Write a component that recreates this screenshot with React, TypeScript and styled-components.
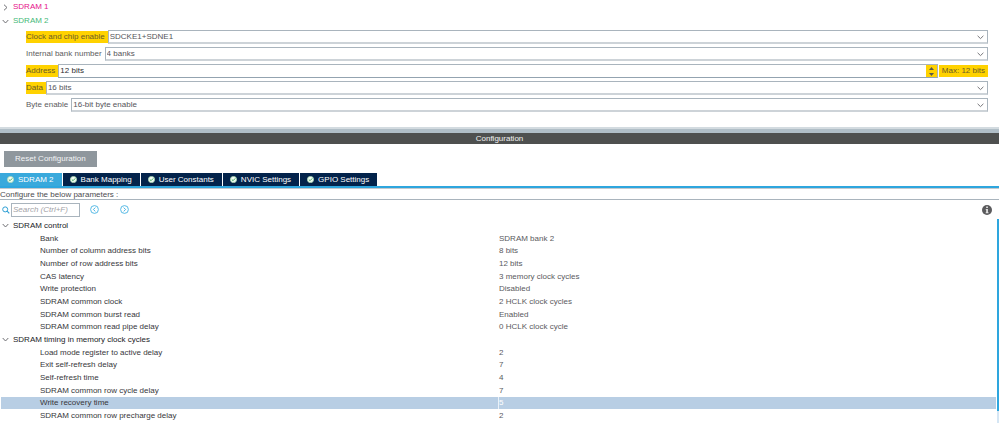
import React, { useState } from 'react';
import styled, { createGlobalStyle } from 'styled-components';

const GlobalStyle = createGlobalStyle`
  *, *::before, *::after { box-sizing: border-box; }
  body {
    margin: 0;
    background: #ffffff;
    color: #4c4c50;
    font-family: "Liberation Sans", Arial, sans-serif;
    font-size: 8px;
    line-height: 12px;
  }
  button, input, select {
    margin: 0;
    border: 0;
    border-radius: 0;
    padding: 0;
    background: none;
    color: inherit;
    font: inherit;
    letter-spacing: inherit;
  }
  button { cursor: pointer; }
`;

const Page = styled.div`
  display: flex;
  flex-direction: column;
  min-height: 100vh;
`;

const ModePanel = styled.section`
  padding-bottom: 15px;
`;

const TreeToggle = styled.button<{ $tone: string }>`
  display: flex;
  align-items: center;
  gap: 4px;
  height: 14px;
  padding-left: 2px;
  color: ${p => p.$tone};
`;

const Fields = styled.div`
  display: flex;
  flex-direction: column;
  gap: 3px;
  padding: 2px 11px 0 26px;
`;

const FieldRow = styled.div`
  display: flex;
  align-items: center;
  height: 14px;
`;

const FieldLabel = styled.label<{ $marked?: boolean }>`
  flex: none;
  height: 12px;
  padding-right: 3px;
  background: ${p => (p.$marked ? '#ffd200' : 'transparent')};
  color: ${p => (p.$marked ? '#6a5c28' : '#5c5c60')};
`;

const SelectBox = styled.div`
  position: relative;
  flex: 1;
  display: flex;
  height: 14px;
  border: 1px solid #a9b4bd;
  border-bottom: 2px solid #cdd3d8;

  svg {
    position: absolute;
    right: 3px;
    top: 4px;
    pointer-events: none;
  }
`;

const Select = styled.select`
  appearance: none;
  width: 100%;
  padding-left: 1px;
  color: #55555a;
`;

const NumberBox = styled.div`
  flex: 1;
  display: flex;
  height: 14px;
  border: 1px solid #a9b4bd;
  border-bottom-color: #93a3b0;
`;

const NumberInput = styled.input`
  flex: 1;
  min-width: 0;
  padding-left: 1px;
  color: #2c2c30;
`;

const Spinner = styled.div`
  display: flex;
  flex-direction: column;
  width: 11px;
  background: #ffd200;

  button {
    display: flex;
    flex: 1;
    align-items: center;
    justify-content: center;
  }
`;

const MaxNote = styled.span`
  height: 12px;
  margin-left: 1px;
  padding: 0 3px;
  background: #ffd200;
  color: #6a5c28;
`;

const Splitter = styled.div`
  height: 6px;
  border-top: 2px solid #d3dbe0;
  background: #b0bec7;
`;

const TitleBar = styled.h2`
  height: 11px;
  margin: 0;
  background: #4e504f;
  color: #f2f2f2;
  font-size: 8px;
  font-weight: 400;
  line-height: 12px;
  text-align: center;
`;

const ResetButton = styled.button`
  align-self: flex-start;
  height: 16px;
  margin: 7px 4px 6px;
  padding: 0 11px;
  background: #8f979d;
  color: #f4f5f6;
`;

const TabBar = styled.div`
  display: flex;
  gap: 1px;
  border-bottom: 2px solid #2ea6de;
`;

const Tab = styled.button<{ $active: boolean }>`
  display: flex;
  align-items: center;
  gap: 4px;
  height: 13px;
  padding: 0 8px 0 7px;
  background: ${p => (p.$active ? '#39a9dc' : '#03234b')};
  color: #ffffff;
`;

const Hint = styled.p`
  height: 12px;
  margin: 0;
  border-top: 1px solid #c3c9ce;
  border-bottom: 1px solid #a9b4bd;
`;

const SearchBar = styled.div`
  display: flex;
  align-items: center;
  height: 19px;
  padding: 0 7px 0 2px;
`;

const SearchLabel = styled.label`
  display: flex;
  width: 9px;
`;

const SearchInput = styled.input`
  width: 69px;
  height: 14px;
  margin-right: 10px;
  padding-left: 1px;
  border: 1px solid #a9b4bd;

  &::placeholder {
    color: #a2a2a6;
    font-style: italic;
    opacity: 1;
  }
`;

const IconButton = styled.button<{ $end?: boolean }>`
  display: flex;
  margin-left: ${p => (p.$end ? 'auto' : '0')};
  margin-right: ${p => (p.$end ? '0' : '21px')};
`;

const ParameterArea = styled.div`
  display: flex;
  flex: 1;
  align-items: stretch;
`;

const ParameterTable = styled.table`
  flex: 1;
  align-self: flex-start;
  border-collapse: collapse;
  table-layout: fixed;
  margin: 0 1px;

  th, td {
    height: 13px;
    padding: 0;
    font-weight: 400;
    line-height: 12px;
    text-align: left;
    white-space: nowrap;
  }
  tr:nth-child(3n) th, tr:nth-child(3n) td { height: 12px; }
`;

const SectionToggle = styled.button`
  display: flex;
  align-items: center;
  gap: 4px;
  padding-left: 1px;
  color: #222226;
`;

const ParameterRow = styled.tr<{ $selected: boolean }>`
  background: ${p => (p.$selected ? '#b8cee4' : 'transparent')};
  cursor: default;

  th { padding-left: 39px; color: #37373b; }
  td {
    border-left: 1px solid ${p => (p.$selected ? '#eaf1f8' : 'transparent')};
    color: ${p => (p.$selected ? '#ffffff' : '#5a5a5e')};
  }
`;

const ScrollTrack = styled.div`
  width: 2px;
  padding-bottom: 12px;
  background: #d5e6f4;
`;

const ScrollThumb = styled.div`
  height: 100%;
  background: #2ea6de;
`;

const Chevron = ({ open = true }: { open?: boolean }) => (
  <svg width="7" height="7" viewBox="0 0 7 7" fill="none" stroke="#707074" aria-hidden="true">
    <path d={open ? 'M0.7 2L3.5 5L6.3 2' : 'M2 0.7L5 3.5L2 6.3'} />
  </svg>
);

const SelectArrow = () => (
  <svg width="7" height="5" viewBox="0 0 7 5" fill="none" stroke="#77777b" aria-hidden="true">
    <path d="M0.6 0.8L3.5 3.6L6.4 0.8" />
  </svg>
);

const SpinArrow = ({ up }: { up?: boolean }) => (
  <svg width="5" height="3" viewBox="0 0 5 3" fill="#55564e" aria-hidden="true">
    <path d={up ? 'M0 3L2.5 0L5 3Z' : 'M0 0L2.5 3L5 0Z'} />
  </svg>
);

const CheckIcon = () => (
  <svg width="7" height="7" viewBox="0 0 7 7" aria-hidden="true">
    <circle cx="3.5" cy="3.5" r="3.1" fill="#f4fbf5" stroke="#a9dcb4" strokeWidth="0.8" />
    <path d="M1.8 3.5L3.1 4.7L5.2 2.4" fill="none" stroke="#3fae5c" />
  </svg>
);

const SearchIcon = () => (
  <svg width="8" height="8" viewBox="0 0 8 8" fill="none" stroke="#2e9fd4" aria-hidden="true">
    <circle cx="3.2" cy="3.4" r="2.5" />
    <path d="M5.1 5.2L7.3 7.4" strokeWidth="1.2" />
  </svg>
);

const StepIcon = ({ next }: { next?: boolean }) => (
  <svg width="9" height="9" viewBox="0 0 9 9" fill="none" stroke="#45b2e2" aria-hidden="true">
    <circle cx="4.5" cy="4.5" r="3.9" strokeWidth="0.9" />
    <path d={next ? 'M3.7 2.6L5.6 4.5L3.7 6.4' : 'M5.3 2.6L3.4 4.5L5.3 6.4'} />
  </svg>
);

const InfoIcon = () => (
  <svg width="10" height="10" viewBox="0 0 10 10" aria-hidden="true">
    <circle cx="5" cy="5" r="5" fill="#5b5b5d" />
    <path d="M4.2 1.6h1.7v1.3H4.2zM3.7 3.9h2.2v3.4h.6v.9H3.7v-.9h.5V4.8h-.5z" fill="#e6e6e6" />
  </svg>
);

interface SelectFieldProps {
  id: string;
  label: string;
  value: string;
  marked?: boolean;
}

const SelectField = ({ id, label, value, marked }: SelectFieldProps) => (
  <FieldRow>
    <FieldLabel htmlFor={id} $marked={marked}>{label}</FieldLabel>
    <SelectBox>
      <Select id={id} defaultValue={value}>
        <option>{value}</option>
      </Select>
      <SelectArrow />
    </SelectBox>
  </FieldRow>
);

const tabs = ['SDRAM 2', 'Bank Mapping', 'User Constants', 'NVIC Settings', 'GPIO Settings'];

const sections: { title: string; rows: [string, string][] }[] = [
  {
    title: 'SDRAM control',
    rows: [
      ['Bank', 'SDRAM bank 2'],
      ['Number of column address bits', '8 bits'],
      ['Number of row address bits', '12 bits'],
      ['CAS latency', '3 memory clock cycles'],
      ['Write protection', 'Disabled'],
      ['SDRAM common clock', '2 HCLK clock cycles'],
      ['SDRAM common burst read', 'Enabled'],
      ['SDRAM common read pipe delay', '0 HCLK clock cycle'],
    ],
  },
  {
    title: 'SDRAM timing in memory clock cycles',
    rows: [
      ['Load mode register to active delay', '2'],
      ['Exit self-refresh delay', '7'],
      ['Self-refresh time', '4'],
      ['SDRAM common row cycle delay', '7'],
      ['Write recovery time', '5'],
      ['SDRAM common row precharge delay', '2'],
    ],
  },
];

export default function App() {
  const [activeTab, setActiveTab] = useState(tabs[0]);
  const [selected, setSelected] = useState('Write recovery time');
  const [bits, setBits] = useState(12);

  return (
    <>
      <GlobalStyle />
      <Page>
        <ModePanel>
          <TreeToggle $tone="#e6128a" aria-expanded={false}><Chevron open={false} />SDRAM 1</TreeToggle>
          <TreeToggle $tone="#45b978" aria-expanded><Chevron />SDRAM 2</TreeToggle>
          <Fields>
            <SelectField id="clock" label="Clock and chip enable" value="SDCKE1+SDNE1" marked />
            <SelectField id="banks" label="Internal bank number" value="4 banks" />
            <FieldRow>
              <FieldLabel htmlFor="address" $marked>Address</FieldLabel>
              <NumberBox>
                <NumberInput id="address" value={`${bits} bits`} readOnly />
                <Spinner>
                  <button aria-label="Increase" onClick={() => setBits(Math.min(12, bits + 1))}><SpinArrow up /></button>
                  <button aria-label="Decrease" onClick={() => setBits(Math.max(11, bits - 1))}><SpinArrow /></button>
                </Spinner>
              </NumberBox>
              <MaxNote>Max: 12 bits</MaxNote>
            </FieldRow>
            <SelectField id="data" label="Data" value="16 bits" marked />
            <SelectField id="bytes" label="Byte enable" value="16-bit byte enable" />
          </Fields>
        </ModePanel>
        <Splitter />
        <TitleBar>Configuration</TitleBar>
        <ResetButton>Reset Configuration</ResetButton>
        <TabBar role="tablist">
          {tabs.map(name => (
            <Tab key={name} role="tab" aria-selected={name === activeTab} $active={name === activeTab} onClick={() => setActiveTab(name)}>
              <CheckIcon />{name}
            </Tab>
          ))}
        </TabBar>
        <Hint>Configure the below parameters :</Hint>
        <SearchBar>
          <SearchLabel htmlFor="search" aria-label="Search"><SearchIcon /></SearchLabel>
          <SearchInput id="search" placeholder="Search (Ctrl+F)" />
          <IconButton aria-label="Previous match"><StepIcon /></IconButton>
          <IconButton aria-label="Next match"><StepIcon next /></IconButton>
          <IconButton aria-label="Information" $end><InfoIcon /></IconButton>
        </SearchBar>
        <ParameterArea>
          <ParameterTable>
            <colgroup><col width="50%" /><col width="50%" /></colgroup>
            <tbody>
              {sections.map(section => (
                <React.Fragment key={section.title}>
                  <tr>
                    <th colSpan={2} scope="colgroup">
                      <SectionToggle aria-expanded><Chevron />{section.title}</SectionToggle>
                    </th>
                  </tr>
                  {section.rows.map(([name, value]) => (
                    <ParameterRow key={name} $selected={name === selected} onClick={() => setSelected(name)}>
                      <th scope="row">{name}</th>
                      <td>{value}</td>
                    </ParameterRow>
                  ))}
                </React.Fragment>
              ))}
            </tbody>
          </ParameterTable>
          <ScrollTrack><ScrollThumb /></ScrollTrack>
        </ParameterArea>
      </Page>
    </>
  );
}
